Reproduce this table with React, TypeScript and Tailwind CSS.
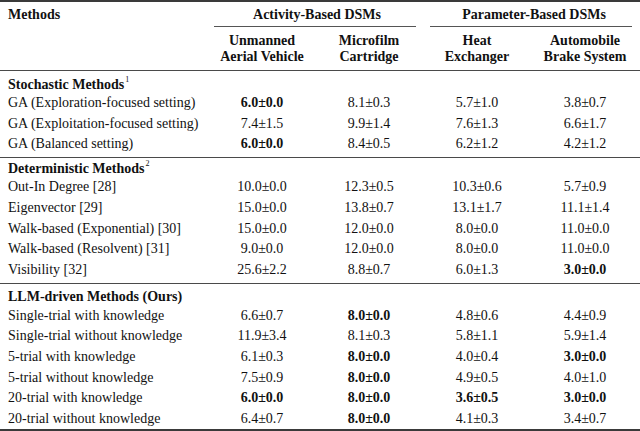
import React from "react";

type Row = [string, string, string, string, string];

const sections: { title: string; sup?: string; pt: string; hh: string; rows: Row[] }[] = [
  {
    title: "Stochastic Methods",
    sup: "1",
    pt: "pt-[6px]",
    hh: "h-[16px]",
    rows: [
      ["GA (Exploration-focused setting)", "*6.0±0.0", "8.1±0.3", "5.7±1.0", "3.8±0.7"],
      ["GA (Exploitation-focused setting)", "7.4±1.5", "9.9±1.4", "7.6±1.3", "6.6±1.7"],
      ["GA (Balanced setting)", "*6.0±0.0", "8.4±0.5", "6.2±1.2", "4.2±1.2"],
    ],
  },
  {
    title: "Deterministic Methods",
    sup: "2",
    pt: "pt-[3px]",
    hh: "h-[16px]",
    rows: [
      ["Out-In Degree [28]", "10.0±0.0", "12.3±0.5", "10.3±0.6", "5.7±0.9"],
      ["Eigenvector [29]", "15.0±0.0", "13.8±0.7", "13.1±1.7", "11.1±1.4"],
      ["Walk-based (Exponential) [30]", "15.0±0.0", "12.0±0.0", "8.0±0.0", "11.0±0.0"],
      ["Walk-based (Resolvent) [31]", "9.0±0.0", "12.0±0.0", "8.0±0.0", "11.0±0.0"],
      ["Visibility [32]", "25.6±2.2", "8.8±0.7", "6.0±1.3", "*3.0±0.0"],
    ],
  },
  {
    title: "LLM-driven Methods (Ours)",
    pt: "pt-[4px]",
    hh: "h-[18px]",
    rows: [
      ["Single-trial with knowledge", "6.6±0.7", "*8.0±0.0", "4.8±0.6", "4.4±0.9"],
      ["Single-trial without knowledge", "11.9±3.4", "8.1±0.3", "5.8±1.1", "5.9±1.4"],
      ["5-trial with knowledge", "6.1±0.3", "*8.0±0.0", "4.0±0.4", "*3.0±0.0"],
      ["5-trial without knowledge", "7.5±0.9", "*8.0±0.0", "4.9±0.5", "4.0±1.0"],
      ["20-trial with knowledge", "*6.0±0.0", "*8.0±0.0", "*3.6±0.5", "*3.0±0.0"],
      ["20-trial without knowledge", "6.4±0.7", "*8.0±0.0", "4.1±0.3", "3.4±0.7"],
    ],
  },
];

const grid = "grid grid-cols-[210px_104px_110px_106px_110px]";

function Val({ v }: { v: string }) {
  const bold = v.startsWith("*");
  return (
    <div className={`text-center ${bold ? "font-bold" : ""}`}>{bold ? v.slice(1) : v}</div>
  );
}

export default function App() {
  return (
    <div
      className="w-[640px] h-[431px] bg-white text-[#111] text-[14px] leading-[16px] overflow-hidden"
      style={{ fontFamily: '"Liberation Serif", "Times New Roman", serif' }}
    >
      <div className="border-t-2 border-[#3a3a3a]" />
      {/* header row 1 */}
      <div className={`${grid} h-[25px] items-center font-bold`}>
        <div className="pl-2 pt-[1px]">Methods</div>
        <div className="col-span-2 flex flex-col h-full">
          <div className="flex-1 flex items-center justify-center pl-[4px] pr-[4px] pt-[1px]">
            Activity-Based DSMs
          </div>
          <div className="ml-[4px] mr-[8px] border-b border-[#555]" />
        </div>
        <div className="col-span-2 flex flex-col h-full">
          <div className="flex-1 flex items-center justify-center pl-[6px] pr-[2px] pt-[1px]">
            Parameter-Based DSMs
          </div>
          <div className="ml-[6px] mr-[8px] border-b border-[#555]" />
        </div>
      </div>
      {/* header row 2 */}
      <div className={`${grid} h-[43px] items-center font-bold`}>
        <div />
        <div className="text-center">
          Unmanned
          <br />
          Aerial Vehicle
        </div>
        <div className="text-center">
          Microfilm
          <br />
          Cartridge
        </div>
        <div className="text-center">
          Heat
          <br />
          Exchanger
        </div>
        <div className="text-center">
          Automobile
          <br />
          Brake System
        </div>
      </div>
      {sections.map((s, si) => (
        <div key={si} className={`border-t border-[#4a4a4a] ${s.pt}`}>
          <div className={`${s.hh} flex items-center pl-2 font-bold`}>
            <span className="whitespace-nowrap">
              {s.title}
              {s.sup && (
                <span className="inline-block font-normal text-[8px] leading-[8px] align-top relative top-[-1px] ml-[1px]">
                  {s.sup}
                </span>
              )}
            </span>
          </div>
          {s.rows.map((r, ri) => (
            <div key={ri} className={`${grid} h-[20.6px] items-center`}>
              <div className="pl-2 whitespace-nowrap">{r[0]}</div>
              <Val v={r[1]} />
              <Val v={r[2]} />
              <Val v={r[3]} />
              <Val v={r[4]} />
            </div>
          ))}
          {si < 2 && <div className="h-[2.4px]" />}
        </div>
      ))}
      <div className="border-t-2 border-[#3a3a3a]" />
    </div>
  );
}
